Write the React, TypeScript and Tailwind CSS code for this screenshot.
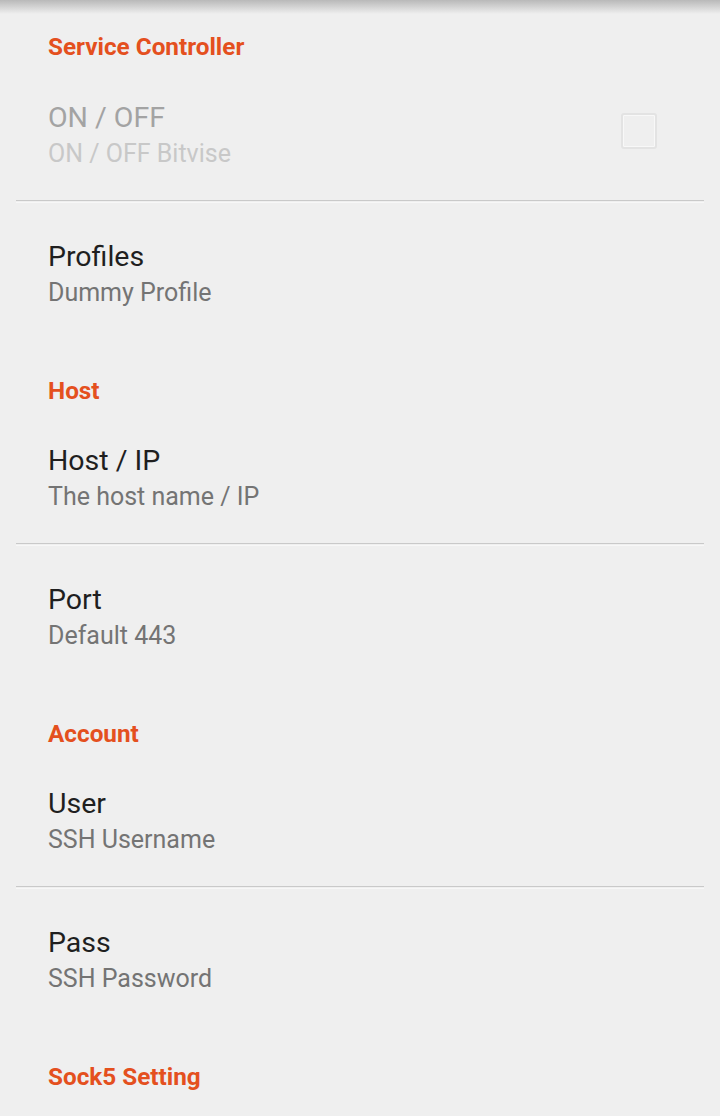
const font = { fontFamily: 'Roboto, "Noto Sans", sans-serif' }

function Header({ label, first }: { label: string; first?: boolean }) {
  return (
    <div className={`${first ? 'h-[63px] pt-[31px]' : 'h-[66px] pt-[35px]'} px-12`}>
      <div className="text-[24.3px] leading-[32px] font-bold text-[#e4501e]">{label}</div>
    </div>
  )
}

function Item({ title, summary, disabled, checkbox }: { title: string; summary: string; disabled?: boolean; checkbox?: boolean }) {
  return (
    <div className="h-[138px] pl-12 pr-[63px] pt-[37px] flex items-start justify-between">
      <div>
        <div className={`text-[28.5px] leading-[36px] ${disabled ? 'text-[#a3a3a3]' : 'text-[#1f1f1f]'}`}>{title}</div>
        <div className={`text-[25px] leading-[36px] ${disabled ? 'text-[#c8c8c8]' : 'text-[#747474]'}`}>{summary}</div>
      </div>
      {checkbox && (
        <div className="mt-[13px] w-[36px] h-[36px] rounded-[3px] border-2 border-[#e3e3e3] shadow-[inset_0_0_0_1px_#f8f8f8]" />
      )}
    </div>
  )
}

function Divider() {
  return (
    <div className="mx-4">
      <div className="h-px bg-[#c9c9c9]" />
      <div className="h-px" />
      <div className="h-px bg-[#f7f7f7]" />
    </div>
  )
}

export default function App() {
  return (
    <div style={font} className="relative w-[720px] h-[1116px] bg-[#efefef] overflow-hidden">
      <div className="absolute top-0 left-0 right-0 h-[14px] bg-gradient-to-b from-[#b9b9b9] to-[#efefef]" />
      <Header label="Service Controller" first />
      <Item title="ON / OFF" summary="ON / OFF Bitvise" disabled checkbox />
      <div className="-mt-px"><Divider /></div>
      <div className="-mt-px">
        <Item title="Profiles" summary="Dummy Profile" />
      </div>
      <Header label="Host" />
      <Item title="Host / IP" summary="The host name / IP" />
      <div className="-mt-px"><Divider /></div>
      <div className="-mt-px">
        <Item title="Port" summary="Default 443" />
      </div>
      <Header label="Account" />
      <Item title="User" summary="SSH Username" />
      <div className="-mt-px"><Divider /></div>
      <div className="-mt-px">
        <Item title="Pass" summary="SSH Password" />
      </div>
      <Header label="Sock5 Setting" />
    </div>
  )
}
